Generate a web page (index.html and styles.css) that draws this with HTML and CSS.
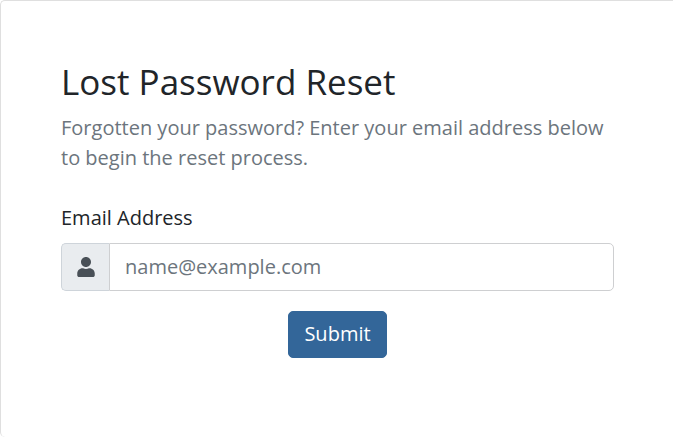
FILE: index.html
```
<!DOCTYPE html>
<html lang="en">
<head>
    <meta charset="utf-8">
    <title>Lost Password Reset</title>
    <link rel="stylesheet" href="styles.css">
</head>
<body>
    <div class="card">
        <form class="card-body">
            <h1>Lost Password Reset</h1>
            <p class="text-muted">Forgotten your password? Enter your email address below to begin the reset process.</p>

            <label for="email">Email Address</label>
            <div class="input-group">
                <span class="input-group-text">
                    <svg class="icon" viewBox="0 0 448 512" fill="currentColor">
                        <path d="M224 256c70.700 0 128-57.300 128-128S294.700 0 224 0 96 57.300 96 128s57.300 128 128 128zm89.600 32h-16.700c-22.200 10.200-46.900 16-72.900 16s-50.600-5.800-72.900-16h-16.700C60.200 288 0 348.200 0 422.400V464c0 26.500 21.500 48 48 48h352c26.500 0 48-21.500 48-48v-41.600c0-74.200-60.200-134.400-134.400-134.400z" />
                    </svg>
                </span>
                <input type="email" id="email" class="form-control" placeholder="name@example.com">
            </div>

            <div class="actions">
                <button type="submit" class="btn">Submit</button>
            </div>
        </form>
    </div>
</body>
</html>
```
FILE: styles.css
```
* {
    box-sizing: border-box;
}

body {
    margin: 0;
    background: #fff;
    color: #212529;
    font-family: "Open Sans", sans-serif;
    font-size: 20px;
    font-weight: 400;
    line-height: 1.5;
}

.card {
    height: 100vh;
    border: 1px solid #dfdfdf;
    border-right: 0;
    border-bottom: 0;
    border-radius: 5px 0 0 5px;
}

.card-body {
    padding: 60px 59px 60px 60px;
}

h1 {
    margin: 0 0 10px;
    font-size: 35px;
    font-weight: 400;
    line-height: 1.2;
}

p {
    margin: 0 0 30px;
}

.text-muted {
    color: #6c757d;
}

label {
    display: block;
    margin-bottom: 10px;
}

.input-group {
    display: flex;
    height: 48px;
    margin-bottom: 20px;
}

.input-group-text {
    display: flex;
    align-items: center;
    padding: 0 14px 0 15px;
    background: #e9ecef;
    border: 1px solid #ced4da;
    border-right: 0;
    border-radius: 5px 0 0 5px;
    color: #495057;
}

.icon {
    width: 18px;
    height: 20px;
}

.form-control {
    flex: 1;
    min-width: 0;
    padding: 0 15px;
    border: 1px solid #cecfd1;
    border-radius: 0 5px 5px 0;
    font: inherit;
    color: #495057;
}

.form-control::placeholder {
    color: #6c757d;
    opacity: 1;
}

.actions {
    text-align: center;
}

.btn {
    height: 47px;
    padding: 0 15px 1px;
    background: #336699;
    border: 1px solid #336699;
    border-radius: 5px;
    color: #fff;
    font: inherit;
    cursor: pointer;
}
```
